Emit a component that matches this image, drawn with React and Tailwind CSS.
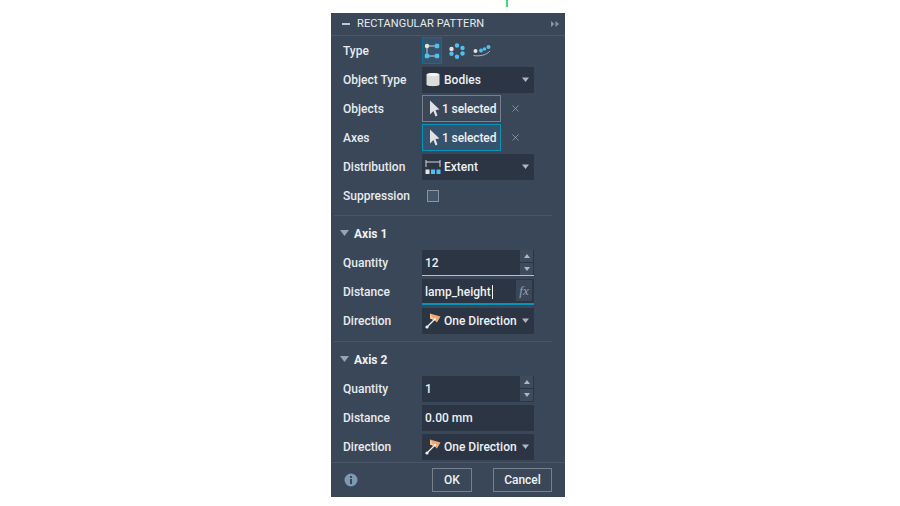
import React from "react";
import { X } from "lucide-react";

const font = "font-['Roboto','Noto_Sans',sans-serif]";

const Caret = () => (
  <svg width="7" height="5" viewBox="0 0 7 5" className="shrink-0">
    <path d="M0 0.5h7L3.5 5z" fill="#aeb6c0" />
  </svg>
);

const Cursor = () => (
  <svg width="11" height="17" viewBox="0 0 11 17" className="shrink-0">
    <path d="M1 0.5 L10.5 9.5 L6.5 10 L8.5 15.5 L6.5 16.5 L4.4 11 L1 14.5z" fill="#dfe1e4" />
  </svg>
);

const Row = ({ label, children }) => (
  <div className="flex h-[29px] items-center">
    <span className="w-[79px] shrink-0 pt-px text-[12px] font-medium text-[#e8ebee]">{label}</span>
    {children}
  </div>
);

const Select = ({ icon, children }) => (
  <div className="flex h-[26px] w-[112px] items-center bg-[#2b3543] pr-[5px] pl-[2px]">
    <span className="flex w-[17px] shrink-0 justify-center">{icon}</span>
    <span className="ml-[3px] flex-1 whitespace-nowrap pt-px text-[12px] font-medium text-[#eef0f2]">{children}</span>
    <Caret />
  </div>
);

const Picker = ({ active }) => (
  <div className="flex items-center">
    <div
      className={`flex h-[27px] w-[79px] items-center gap-[2px] border pl-[6px] ${
        active ? "border-[#0a93b8] bg-[#35536d]" : "border-[#77818e] bg-[#3a4758]"
      }`}
    >
      <Cursor />
      <span className="whitespace-nowrap pt-px text-[12px] font-medium tracking-[-0.1px] text-[#eef0f2]">1 selected</span>
    </div>
    <X size={11} strokeWidth={1.5} className="ml-[9px] text-[#a6aeb8]" />
  </div>
);

const Spinner = () => (
  <div className="flex h-[25px] w-[13px] flex-col gap-px">
    <div className="flex h-[12px] items-center justify-center bg-[#3e4b5c]">
      <svg width="6" height="4" viewBox="0 0 6 4"><path d="M0 4h6L3 0z" fill="#aeb6c0" /></svg>
    </div>
    <div className="flex h-[12px] items-center justify-center bg-[#3e4b5c]">
      <svg width="6" height="4" viewBox="0 0 6 4"><path d="M0 0h6L3 4z" fill="#aeb6c0" /></svg>
    </div>
  </div>
);

const Field = ({ children, underline = "", right }) => (
  <div className={`flex h-[26px] w-[112px] items-center justify-between bg-[#2b3543] pr-px pl-[3px] ${underline}`}>
    <span className={`whitespace-nowrap text-[12px] font-medium text-[#eef0f2] ${underline ? "pt-[2px]" : "pt-px"}`}>{children}</span>
    {right}
  </div>
);

const AxisHeader = ({ title }) => (
  <div className="flex h-[24px] items-center">
    <svg width="9" height="6" viewBox="0 0 9 6" className="ml-[-3px]"><path d="M0 0h9L4.5 6z" fill="#9aa3ae" /></svg>
    <span className="ml-[5px] pt-[2px] text-[12px] font-bold text-[#eef0f2]">{title}</span>
  </div>
);

const Divider = ({ className = "" }) => <div className={`mr-[13px] ml-[-9px] h-px bg-[#4a5666] ${className}`} />;

const RectIcon = () => (
  <svg width="16" height="16" viewBox="0 0 16 16">
    <path d="M3 3H13M3 3V13M3 13H13" stroke="#c9ced4" strokeWidth="1" fill="none" />
    <circle cx="3" cy="3" r="2.2" fill="#e6e3dc" />
    <rect x="10.8" y="0.8" width="4.4" height="4.4" rx="1" fill="#4fc1ef" />
    <rect x="0.8" y="10.8" width="4.4" height="4.4" rx="1" fill="#4fc1ef" />
    <rect x="10.8" y="10.8" width="4.4" height="4.4" rx="1" fill="#4fc1ef" />
  </svg>
);

const CircularIcon = () => (
  <svg width="16" height="16" viewBox="0 0 16 16">
    <circle cx="2.5" cy="6" r="2.2" fill="#e6e3dc" />
    <circle cx="8" cy="2.5" r="2.2" fill="#4fc1ef" />
    <circle cx="13.5" cy="5" r="2.2" fill="#4fc1ef" />
    <circle cx="13.5" cy="10.5" r="2.2" fill="#4fc1ef" />
    <circle cx="8" cy="13.7" r="2.2" fill="#4fc1ef" />
    <circle cx="2.5" cy="10.8" r="2.2" fill="#4fc1ef" />
  </svg>
);

const PathIcon = () => (
  <svg width="18" height="12" viewBox="0 0 18 12">
    <path d="M0.5 10.5C6 11.5 13 10.5 17 6" stroke="#aeb6c0" strokeWidth="1" fill="none" />
    <circle cx="2.5" cy="6" r="2" fill="#e6e3dc" />
    <circle cx="8" cy="5.5" r="2" fill="#4fc1ef" />
    <circle cx="11.5" cy="4" r="1.8" fill="#4fc1ef" />
    <circle cx="15.5" cy="2" r="2" fill="#4fc1ef" />
  </svg>
);

const BodyIcon = () => (
  <svg width="14" height="15" viewBox="0 0 14 15">
    <path d="M0.5 2.5C0.5 0.5 13.5 0.5 13.5 2.5V12.5C13.5 14.7 0.5 14.7 0.5 12.5z" fill="#dcdcda" />
    <ellipse cx="7" cy="2.6" rx="5.5" ry="1.6" fill="#f4f4f2" />
  </svg>
);

const ExtentIcon = () => (
  <svg width="16" height="16" viewBox="0 0 16 16">
    <path d="M1 1V8M15 1V8M1 3H15" stroke="#d4d7db" strokeWidth="1" fill="none" />
    <rect x="0.5" y="10.5" width="4" height="4.5" fill="#e6e3dc" />
    <rect x="6" y="10.5" width="4" height="4.5" fill="#4fc1ef" />
    <rect x="11.5" y="10.5" width="4" height="4.5" fill="#4fc1ef" />
  </svg>
);

const DirectionIcon = () => (
  <svg width="16" height="16" viewBox="0 0 16 16">
    <path d="M5 0.5L15.5 3.5L12 9.5L9 7L5 5.5z" fill="#f2a66f" />
    <path d="M5 0.5L5 5.5L9 7z" fill="#f7c8a0" />
    <path d="M2 14L10.5 5.5" stroke="#f1f2f3" strokeWidth="1.3" />
    <circle cx="2" cy="14" r="1.6" fill="#f1f2f3" />
    <circle cx="10" cy="6" r="1.2" fill="#f1f2f3" />
  </svg>
);

const TypeBtn = ({ active, children }) => (
  <div className={`flex h-[27px] w-[20px] items-center justify-center ${active ? "border border-[#0f6f8f] bg-[#35536d]" : ""}`}>
    {children}
  </div>
);

export default function App() {
  return (
    <div className={`relative min-h-[506px] bg-white pt-[13px] pl-[331px] ${font}`}>
      <div className="absolute top-0 left-[506px] h-[7px] w-[2px] bg-[#3fdc7c]" />
      <div className="flex h-[484px] w-[234px] flex-col bg-[#3a4758]">
        {/* Title bar */}
        <div className="flex h-[23px] shrink-0 items-center border-b border-[#4a5666] pr-[6px] pl-[11px]">
          <div className="h-[2px] w-[8px] bg-[#c4c9cf]" />
          <span className="ml-[7px] flex-1 pt-[1px] text-[11px] tracking-[0.1px] text-[#e8ebee]">RECTANGULAR PATTERN</span>
          <svg width="8" height="6" viewBox="0 0 8 6">
            <path d="M0 0l3.5 3L0 6zM4.5 0L8 3L4.5 6z" fill="#8a94a0" />
          </svg>
        </div>

        <div className="flex-1 pl-[12px]">
          <Row label="Type">
            <div className="flex items-center gap-[5px]">
              <TypeBtn active><RectIcon /></TypeBtn>
              <TypeBtn><CircularIcon /></TypeBtn>
              <TypeBtn><PathIcon /></TypeBtn>
            </div>
          </Row>
          <Row label="Object Type"><Select icon={<BodyIcon />}>Bodies</Select></Row>
          <Row label="Objects"><Picker /></Row>
          <Row label="Axes"><Picker active /></Row>
          <Row label="Distribution"><Select icon={<ExtentIcon />}>Extent</Select></Row>
          <Row label="Suppression">
            <div className="ml-[5px] h-[12px] w-[12px] border border-[#8b95a1] bg-[#46566a]" />
          </Row>

          <Divider className="mt-[5px] mb-[5px]" />
          <AxisHeader title="Axis 1" />
          <div className="h-[3px]" />
          <Row label="Quantity">
            <Field underline="border-b border-[#b4c0cc]" right={<Spinner />}>12</Field>
          </Row>
          <Row label="Distance">
            <Field
              underline="border-b-2 border-[#0a93b8]"
              right={<span className="mr-[1px] flex h-[21px] w-[16px] items-center justify-center bg-[#3a4758] font-['Liberation_Serif',serif] text-[13px] italic text-[#98a1ac]">fx</span>}
            >
              lamp_height<span className="ml-px inline-block h-[14px] w-px translate-y-[3px] bg-[#eef0f2]" />
            </Field>
          </Row>
          <Row label="Direction"><Select icon={<DirectionIcon />}>One Direction</Select></Row>

          <Divider className="mt-[6px] mb-[5px]" />
          <AxisHeader title="Axis 2" />
          <div className="h-[3px]" />
          <Row label="Quantity">
            <Field right={<Spinner />}>1</Field>
          </Row>
          <Row label="Distance"><Field>0.00 mm</Field></Row>
          <Row label="Direction"><Select icon={<DirectionIcon />}>One Direction</Select></Row>
        </div>

        {/* Footer */}
        <div className="flex h-[35px] shrink-0 items-center border-t border-[#4a5666] px-[13px]">
          <svg width="14" height="14" viewBox="0 0 14 14">
            <circle cx="7" cy="7" r="6.5" fill="#7d9ab5" />
            <rect x="6" y="6" width="2" height="5" fill="#3a4758" />
            <rect x="6" y="3" width="2" height="2" fill="#3a4758" />
          </svg>
          <button className="ml-[74px] h-[24px] w-[40px] border border-[#77818e] text-[12px] font-medium text-[#eef0f2]">OK</button>
          <button className="ml-[21px] h-[24px] w-[59px] border border-[#77818e] text-[12px] font-medium text-[#eef0f2]">Cancel</button>
        </div>
      </div>
    </div>
  );
}
